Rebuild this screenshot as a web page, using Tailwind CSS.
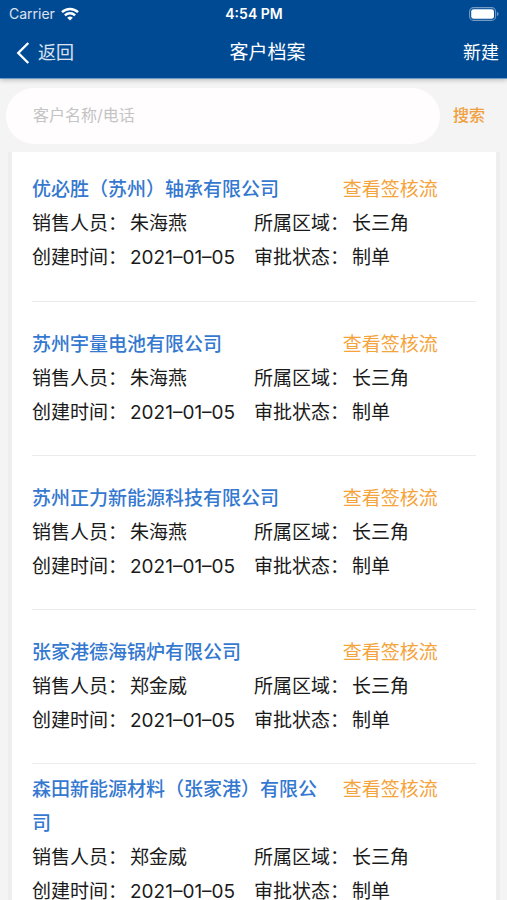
<!DOCTYPE html>
<html lang="zh-CN">
<head>
<meta charset="utf-8">
<meta name="viewport" content="width=device-width, initial-scale=1">
<title>客户档案</title>
<script src="https://cdn.jsdelivr.net/npm/@tailwindcss/browser@4"></script>
</head>
<body class="flex h-screen flex-col overflow-hidden bg-[#f4f4f4] font-['Inter','Noto_Sans_CJK_SC',sans-serif] text-[19px] leading-[34px] text-[#1a1a1a]">
<header class="relative shrink-0 border-b border-[#6f9ccb] bg-[#004a94] text-white shadow-[0_1px_5px_rgba(0,0,0,0.25)]">
  <div class="grid h-7 grid-cols-3 items-center pr-2 pl-[9px] text-[14px] leading-7">
    <div class="flex items-center gap-[6px] text-white/85">
      <span>Carrier</span>
      <svg class="h-[14px] w-[18px]" viewBox="0 0 18 14" fill="none" stroke="#fff" stroke-width="2.5" aria-hidden="true"><path d="M1 5.2a11.6 11.6 0 0 1 16 0M3.9 8.4a7.4 7.4 0 0 1 10.2 0"/><path d="M9 13.5 6.2 10.8a4 4 0 0 1 5.6 0z" fill="#fff" stroke="none"/></svg>
    </div>
    <span class="text-center font-semibold">4:54 PM</span>
    <svg class="h-[14px] w-[30px] justify-self-end" viewBox="0 0 30 14" fill="none" aria-hidden="true"><rect x=".6" y=".6" width="26" height="12.8" rx="4" stroke="#fff" stroke-opacity=".45" stroke-width="1.1"/><rect x="2.2" y="2.2" width="22.8" height="9.6" rx="2.4" fill="#fff"/><path d="M28.2 5v4c.8-.3 1.3-1.1 1.3-2s-.5-1.7-1.3-2z" fill="#fff" fill-opacity=".5"/></svg>
  </div>
  <nav class="grid h-[50px] grid-cols-[1fr_auto_1fr] items-center pr-2 pl-4">
    <button type="button" class="flex items-center gap-2 justify-self-start text-[18px] text-white/85">
      <svg class="h-[22px] w-[14px]" viewBox="0 0 14 22" fill="none" stroke="#fff" stroke-width="2.4" aria-hidden="true"><path d="M12.3 1 2.3 11l10 10"/></svg>返回
    </button>
    <h1 class="pl-5">客户档案</h1>
    <button type="button" class="justify-self-end text-[18px]">新建</button>
  </nav>
</header>
<form class="flex shrink-0 items-center gap-[13px] pt-[9px] pr-[22px] pb-2 pl-[6px] text-[16px]">
  <input type="search" aria-label="客户名称/电话" placeholder="客户名称/电话" class="h-14 min-w-0 flex-1 rounded-full bg-[#fffdfe] px-[27px] pb-[2px] outline-none placeholder:text-[#c4c4c4]">
  <button type="button" class="pb-[2px] font-medium text-[#f0a040]">搜索</button>
</form>
<main class="mr-[11px] ml-3 min-h-0 flex-1 overflow-y-auto bg-white px-5 shadow-[0_0_0_4px_#eeeeee] [clip-path:inset(0_-4px)] [scrollbar-width:none]">
  <ul id="list"></ul>
</main>
<template id="row">
  <li class="flex min-h-[154px] flex-col justify-center border-b border-[#ececec] first:min-h-0 first:pt-[21px] first:pb-[26px]">
    <div class="grid grid-cols-[7fr_3fr]">
      <h2 class="pr-3 font-medium text-[#3478d0]"></h2>
      <a href="#" class="text-[#f5a33b]">查看签核流</a>
    </div>
    <dl class="grid grid-cols-[1fr_1fr] whitespace-nowrap">
      <div class="flex"><dt class="w-[98px] shrink-0">销售人员：</dt><dd></dd></div>
      <div class="flex"><dt class="w-[98px] shrink-0">所属区域：</dt><dd></dd></div>
      <div class="flex"><dt class="w-[98px] shrink-0">创建时间：</dt><dd></dd></div>
      <div class="flex"><dt class="w-[98px] shrink-0">审批状态：</dt><dd></dd></div>
    </dl>
  </li>
</template>
<script>
const customers = [
  ['优必胜（苏州）轴承有限公司', '朱海燕'],
  ['苏州宇量电池有限公司', '朱海燕'],
  ['苏州正力新能源科技有限公司', '朱海燕'],
  ['张家港德海锅炉有限公司', '郑金威'],
  ['森田新能源材料（张家港）有限公司', '郑金威'],
];
for (const [name, sales] of customers) {
  const row = document.getElementById('row').content.cloneNode(true);
  row.querySelector('h2').textContent = name;
  const values = [sales, '长三角', '2021–01–05', '制单'];
  row.querySelectorAll('dd').forEach((dd, i) => { dd.textContent = values[i]; });
  document.getElementById('list').append(row);
}
</script>
</body>
</html>
